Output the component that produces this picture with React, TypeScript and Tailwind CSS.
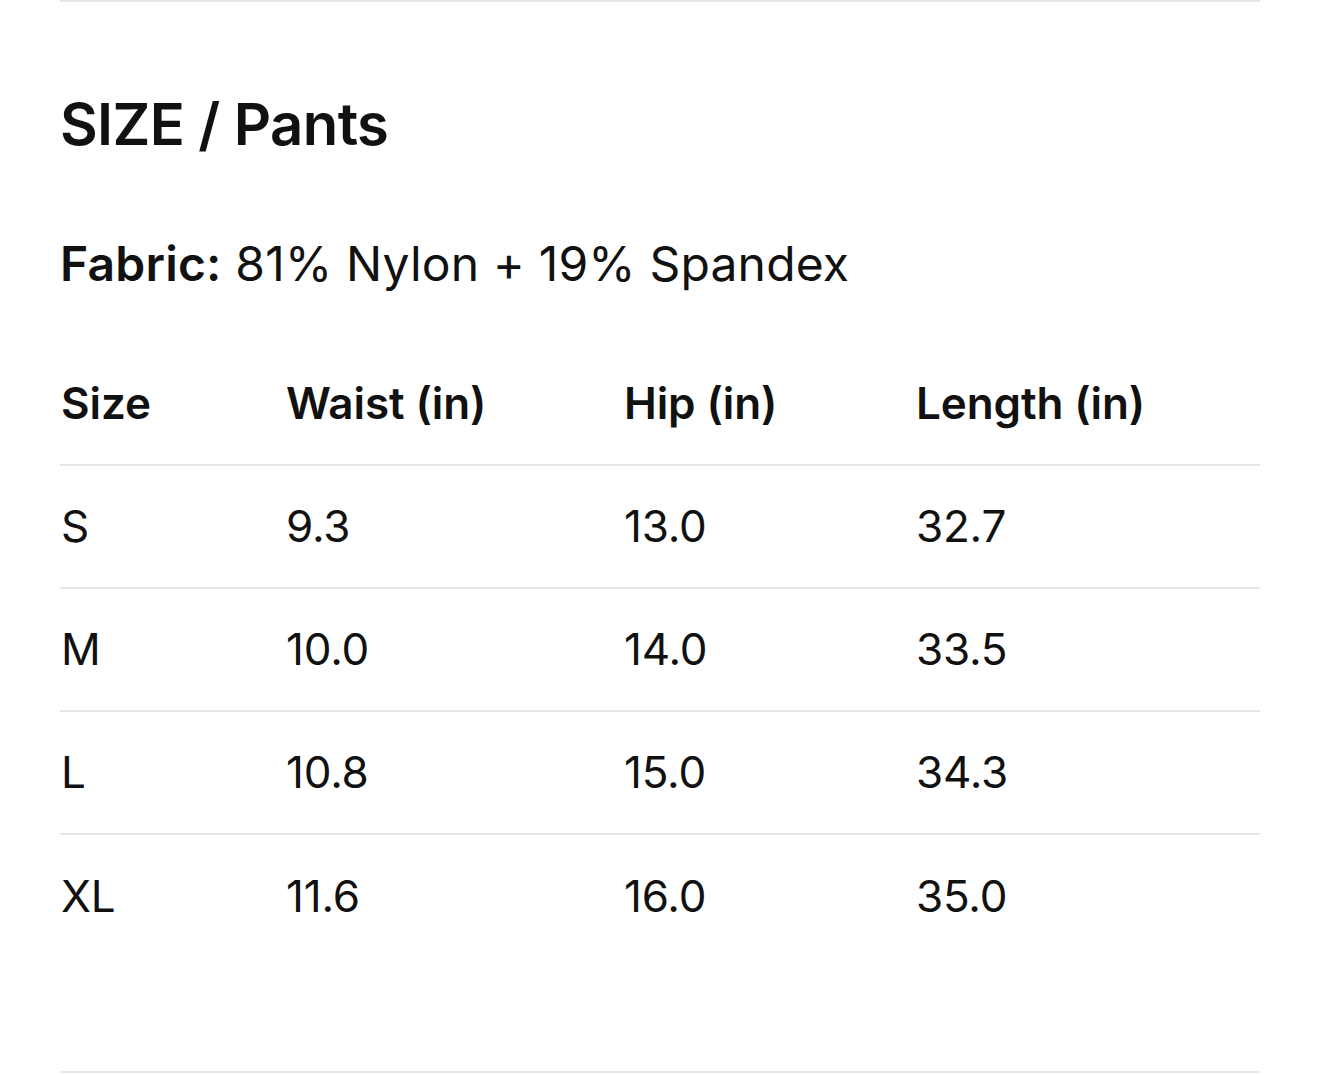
const rows = [
  ["S", "9.3", "13.0", "32.7"],
  ["M", "10.0", "14.0", "33.5"],
  ["L", "10.8", "15.0", "34.3"],
  ["XL", "11.6", "16.0", "35.0"],
];

const cols = "grid grid-cols-[226px_338px_292px_1fr]";

export default function App() {
  return (
    <div className="min-h-[1074px] w-full bg-white px-[60px] font-['Inter',sans-serif] text-[#111111]">
      <div className="h-[2px] bg-[#e6e6e6]" />
      <h1 className="mt-[84px] text-[58px] font-semibold leading-[76px] tracking-[-0.6px]">SIZE / Pants</h1>
      <p className="mt-[72px] text-[48px] leading-[60px] tracking-[0.2px]">
        <span className="font-semibold">Fabric:</span> 81% Nylon + 19% Spandex
      </p>
      <div className="mt-[49px]">
        <div className={`${cols} h-[123px] items-center pb-[2px] border-b-2 border-[#e6e6e6] text-[44px] font-semibold tracking-[-0.1px]`}>
          <div className="pl-[1px]">Size</div>
          <div>Waist (in)</div>
          <div>Hip (in)</div>
          <div>Length (in)</div>
        </div>
        {rows.map((r, i) => (
          <div
            key={r[0]}
            className={`${cols} h-[123px] items-center pb-[2px] text-[44px] tracking-[-0.2px] ${i < rows.length - 1 ? "border-b-2 border-[#e6e6e6]" : ""}`}
          >
            {r.map((c, j) => (
              <div key={j} className={j === 0 ? "pl-[1px]" : ""}>
                {c}
              </div>
            ))}
          </div>
        ))}
      </div>
      <div className="mt-[113px] h-[2px] bg-[#e6e6e6]" />
    </div>
  );
}
